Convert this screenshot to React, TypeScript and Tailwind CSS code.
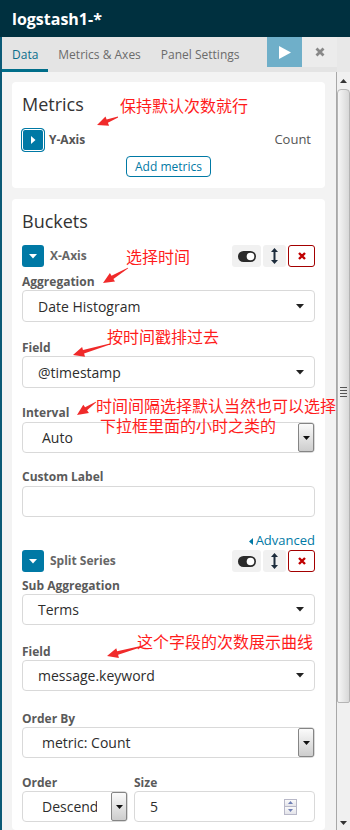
import React from "react";

function Arrow({ tail, tip }: { tail: [number, number]; tip: [number, number] }) {
  const dx = tip[0] - tail[0];
  const dy = tip[1] - tail[1];
  const len = Math.hypot(dx, dy);
  const ux = dx / len;
  const uy = dy / len;
  const nx = -uy;
  const ny = ux;
  const h = 11;
  const bx = tip[0] - ux * h;
  const by = tip[1] - uy * h;
  const p = (x: number, y: number) => `${x.toFixed(1)},${y.toFixed(1)}`;
  const pts = [
    p(tail[0] + nx * 0.4, tail[1] + ny * 0.4),
    p(bx + nx * 1.8, by + ny * 1.8),
    p(bx + nx * 5, by + ny * 5),
    p(tip[0], tip[1]),
    p(bx - nx * 5, by - ny * 5),
    p(bx - nx * 1.8, by - ny * 1.8),
    p(tail[0] - nx * 0.4, tail[1] - ny * 0.4),
  ].join(" ");
  return <polygon points={pts} fill="#f02a2a" />;
}

function Caret() {
  return (
    <svg width="8" height="5" viewBox="0 0 8 5">
      <path d="M0 0h8L4 4.5z" fill="#222" />
    </svg>
  );
}

function NativeBtn() {
  return (
    <div className="w-[16px] h-[29px] border border-[#858585] rounded-[2px] bg-gradient-to-b from-[#fbfbfb] to-[#cdcdcd] flex items-center justify-center shrink-0">
      <svg width="7" height="4" viewBox="0 0 7 4">
        <path d="M0 0h7L3.5 4z" fill="#111" />
      </svg>
    </div>
  );
}

function Select({ value, native = false, h = 32 }: { value: string; native?: boolean; h?: number }) {
  return (
    <div
      className={`flex items-center border border-[#d9d9d9] rounded-[4px] bg-white ${h === 32 ? "h-[32px]" : h === 31 ? "h-[31px]" : "h-[30px]"}`}
    >
      <div
        className={`flex-1 min-w-0 overflow-hidden whitespace-nowrap text-[14px] text-[#2d2d2d] ${native ? "pl-[19px] mr-[14px]" : "pl-[15px]"}`}
      >
        {value}
      </div>
      {native ? (
        <NativeBtn />
      ) : (
        <div className="pr-[10px] flex items-center">
          <Caret />
        </div>
      )}
    </div>
  );
}

function Label({ children }: { children: React.ReactNode }) {
  return <div className="h-[17px] leading-[17px] text-[12px] font-bold text-[#5a5a5a]">{children}</div>;
}

function ToggleBtn({ label }: { label: string }) {
  return (
    <div className="flex items-center h-[22px]">
      <div className="w-[22px] h-[22px] rounded-[3px] bg-[#0079a5] flex items-center justify-center">
        <svg width="8" height="5" viewBox="0 0 8 5">
          <path d="M0 0h8L4 4.5z" fill="#fff" />
        </svg>
      </div>
      <div className="ml-[6px] text-[12px] font-bold text-[#666]">{label}</div>
      <div className="ml-auto flex h-[22px] gap-[2px]">
        <div className="w-[29px] h-[22px] bg-[#f1f1f1] rounded-[3px] flex items-center justify-center">
          <svg width="18" height="11" viewBox="0 0 18 11">
            <rect x="0" y="0" width="18" height="11" rx="5.5" fill="#2a2a2a" />
            <circle cx="12.5" cy="5.5" r="3.8" fill="#fff" />
          </svg>
        </div>
        <div className="w-[23px] h-[22px] bg-[#f1f1f1] rounded-[3px] flex items-center justify-center">
          <svg width="7" height="16" viewBox="0 0 7 16">
            <path d="M3.5 0L7 4H4.5v8H7L3.5 16L0 12h2.5V4H0z" fill="#1d2c3c" />
          </svg>
        </div>
        <div className="w-[27px] h-[22px] bg-white border border-[#a30000] rounded-[3px] flex items-center justify-center">
          <svg width="8" height="8" viewBox="0 0 8 8">
            <path d="M1 1L7 7M7 1L1 7" stroke="#c00000" strokeWidth="2.4" />
          </svg>
        </div>
      </div>
    </div>
  );
}

function Scrollbar() {
  return (
    <div className="w-[14px] h-full flex flex-col bg-[#f0f0f0] border-l border-[#a8a8a8] shrink-0">
      <div className="h-[17px] flex items-center justify-center">
        <svg width="7" height="4" viewBox="0 0 7 4">
          <path d="M0 4h7L3.5 0z" fill="#333" />
        </svg>
      </div>
      <div className="h-[614px] rounded-t-[4px] rounded-b-[2px] border border-[#b4b4b4] bg-gradient-to-r from-[#f6f6f6] to-[#d8d8d8] flex items-center justify-center">
        <div className="flex flex-col gap-[2px] -mt-[8px]">
          <div className="w-[7px] h-[1px] bg-[#555]" />
          <div className="w-[7px] h-[1px] bg-[#555]" />
          <div className="w-[7px] h-[1px] bg-[#555]" />
          <div className="w-[7px] h-[1px] bg-[#555]" />
        </div>
      </div>
      <div className="flex-1" />
      <div className="h-[14px] flex items-center justify-center">
        <svg width="7" height="4" viewBox="0 0 7 4">
          <path d="M0 0h7L3.5 4z" fill="#333" />
        </svg>
      </div>
    </div>
  );
}

const cjk = "font-['Noto_Sans_CJK_SC',sans-serif] text-[16px] leading-[16px] text-[#ff1c1c] whitespace-nowrap absolute";

export default function App() {
  return (
    <div className="relative w-[350px] h-[830px] overflow-hidden bg-[#f3f3f3] font-['Open_Sans',sans-serif]">
      <div className="h-[37px] bg-[#00303f] flex items-center pl-[12px] text-white font-bold text-[16px]">
        logstash1-*
      </div>
      <div className="flex h-[793px]">
        <div className="w-[2px] bg-[#0b5a76] shrink-0" />
        <div className="flex-1 flex flex-col min-w-0">
          <div className="h-[35px] bg-[#e4e4e4] flex shrink-0">
            <div className="px-[10px] h-[35px] flex items-center text-[12px] text-[#0a6e8c] border-b-[3px] border-[#006e8a] pt-[3px]">
              Data
            </div>
            <div className="px-[10px] h-[35px] flex items-center text-[12px] text-[#6b6b6b]">Metrics &amp; Axes</div>
            <div className="px-[10px] h-[35px] flex items-center text-[12px] text-[#6b6b6b]">Panel Settings</div>
            <div className="ml-auto flex h-[30px]">
              <div className="w-[35px] h-[30px] bg-[#6fafc9] flex items-center justify-center">
                <svg width="12" height="13" viewBox="0 0 12 13">
                  <path d="M0 0L12 6.5L0 13z" fill="#fff" />
                </svg>
              </div>
              <div className="w-[35px] h-[30px] bg-[#ececec] flex items-center justify-center">
                <svg width="10" height="10" viewBox="0 0 10 10">
                  <path d="M1.5 1.5L8.5 8.5M8.5 1.5L1.5 8.5" stroke="#888" strokeWidth="2.8" />
                </svg>
              </div>
            </div>
            <div className="w-[13px] bg-[#e8e8e8]" />
          </div>
          <div className="flex flex-1 min-h-0">
            <div className="flex-1 min-w-0 pl-[10px] pr-[11px] pt-[10px] flex flex-col gap-[11px] overflow-hidden">
              {/* Metrics card */}
              <div className="bg-white rounded-[4px] pt-[8px] px-[10px] pb-[11px] shrink-0">
                <div className="text-[18px] leading-[28px] text-[#333]">Metrics</div>
                <div className="mt-[10px] h-[24px] flex items-center">
                  <div className="-ml-[1px] w-[24px] h-[24px] rounded-[4px] bg-[#0079a5] border border-[#0079a5] shadow-[inset_0_0_0_1px_#fff] flex items-center justify-center">
                    <svg width="5" height="8" viewBox="0 0 5 8">
                      <path d="M0 0L4.5 4L0 8z" fill="#fff" />
                    </svg>
                  </div>
                  <div className="ml-[4px] text-[12px] font-bold text-[#555]">Y-Axis</div>
                  <div className="ml-auto mr-[4px] text-[13px] text-[#555]">Count</div>
                </div>
                <div className="mt-[4px] flex justify-center">
                  <div className="h-[21px] w-[85px] border border-[#0079a5] rounded-[4px] text-[12px] text-[#0079a5] flex items-center justify-center">
                    Add metrics
                  </div>
                </div>
              </div>
              {/* Buckets card */}
              <div className="bg-white rounded-[4px] pt-[8px] px-[10px] flex-1 shrink-0">
                <div className="text-[18px] leading-[28px] text-[#333]">Buckets</div>
                <div className="mt-[10px]">
                  <ToggleBtn label="X-Axis" />
                </div>
                <div className="mt-[6px]">
                  <Label>Aggregation</Label>
                  <Select value="Date Histogram" />
                </div>
                <div className="mt-[17px]">
                  <Label>Field</Label>
                  <Select value="@timestamp" />
                </div>
                <div className="mt-[16px]">
                  <Label>Interval</Label>
                  <div className="mt-[1px]">
                    <Select value="Auto" native h={31} />
                  </div>
                </div>
                <div className="mt-[15px]">
                  <Label>Custom Label</Label>
                  <div className="mt-[1px] h-[31px] border border-[#d9d9d9] rounded-[4px] bg-white" />
                </div>
                <div className="mt-[15px] h-[18px] flex justify-end items-center text-[13px] text-[#0079a5]">
                  <svg width="4" height="7" viewBox="0 0 4 7" className="mr-[3px]">
                    <path d="M4 0L0 3.5L4 7z" fill="#0079a5" />
                  </svg>
                  Advanced
                </div>
                <div>
                  <ToggleBtn label="Split Series" />
                </div>
                <div className="mt-[5px]">
                  <Label>Sub Aggregation</Label>
                  <Select value="Terms" h={31} />
                </div>
                <div className="mt-[18px]">
                  <Label>Field</Label>
                  <Select value="message.keyword" h={31} />
                </div>
                <div className="mt-[19px]">
                  <Label>Order By</Label>
                  <Select value="metric: Count" native h={31} />
                </div>
                <div className="mt-[16px] flex gap-[6px]">
                  <div className="w-[106px] shrink-0">
                    <Label>Order</Label>
                    <Select value="Descending" native h={31} />
                  </div>
                  <div className="flex-1 min-w-0">
                    <Label>Size</Label>
                    <div className="h-[31px] border border-[#d9d9d9] rounded-[4px] bg-white flex items-center">
                      <div className="flex-1 pl-[15px] text-[14px] text-[#2d2d2d]">5</div>
                      <div className="mr-[17px] flex flex-col">
                        <div className="w-[13px] h-[8px] border border-[#b8b8c8] bg-gradient-to-b from-[#fafafa] to-[#e4e4ea] flex items-center justify-center">
                          <svg width="5" height="3" viewBox="0 0 5 3">
                            <path d="M0 3h5L2.5 0z" fill="#6f7fb5" />
                          </svg>
                        </div>
                        <div className="w-[13px] h-[8px] border border-t-0 border-[#b8b8c8] bg-gradient-to-b from-[#fafafa] to-[#e4e4ea] flex items-center justify-center">
                          <svg width="5" height="3" viewBox="0 0 5 3">
                            <path d="M0 0h5L2.5 3z" fill="#6f7fb5" />
                          </svg>
                        </div>
                      </div>
                    </div>
                  </div>
                </div>
              </div>
            </div>
            <Scrollbar />
          </div>
        </div>
      </div>

      {/* annotations overlay */}
      <div className="absolute inset-0 pointer-events-none">
        <svg width="350" height="830" className="absolute left-0 top-0">
          <Arrow tail={[118, 117]} tip={[97, 125]} />
          <Arrow tail={[128, 268]} tip={[103, 283]} />
          <Arrow tail={[110, 344]} tip={[73, 355]} />
          <Arrow tail={[96, 402]} tip={[77, 415]} />
          <Arrow tail={[143, 646]} tip={[107, 656]} />
        </svg>
        <div className={`${cjk} left-[120px] top-[97px]`}>保持默认次数就行</div>
        <div className={`${cjk} left-[126px] top-[248px]`}>选择时间</div>
        <div className={`${cjk} left-[107px] top-[328px]`}>按时间戳排过去</div>
        <div className="absolute left-[96px] top-[395px] font-['Noto_Sans_CJK_SC',sans-serif] text-[16px] leading-[20px] text-[#ff1c1c] whitespace-nowrap">
          <span className="block">时间间隔选择默认当然也可以选择</span>
          <span className="block pl-[4px]">下拉框里面的小时之类的</span>
        </div>
        <div className={`${cjk} left-[137px] top-[633px]`}>这个字段的次数展示曲线</div>
      </div>
    </div>
  );
}
